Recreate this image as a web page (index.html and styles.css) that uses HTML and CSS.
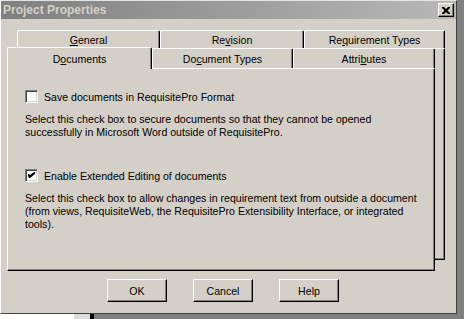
FILE: index.html
```html
<!DOCTYPE html>
<html lang="en">
<head>
    <meta charset="UTF-8">
    <title>Project Properties</title>
    <link rel="stylesheet" href="styles.css">
</head>
<body>
    <div class="window">
        <div class="titlebar">
            <span class="title">Project Properties</span>
            <span class="close">
                <svg width="8" height="7" viewBox="0 0 8 7"><path d="M0 0h2l2 2 2-2h2v1l-2.5 2.5 2.5 2.5v1h-2l-2-2-2 2h-2v-1l2.5-2.5-2.5-2.5z" fill="#000"/></svg>
            </span>
        </div>

        <!-- back row of tabs -->
        <div class="row1">
            <div class="tab w-general"><u>G</u>eneral</div>
            <div class="tab w-revision">Re<u>v</u>ision</div>
            <div class="tab w-reqtypes">Re<u>q</u>uirement Types</div>
        </div>

        <div class="deck">
            <div class="backpage"></div>
            <div class="front">
                <div class="row2">
                    <div class="tab selected w-documents">D<u>o</u>cuments</div>
                    <div class="tab w-doctypes">Do<u>c</u>ument Types</div>
                    <div class="tab w-attributes">Attri<u>b</u>utes</div>
                </div>
                <div class="panel">
                    <div class="option">
                        <span class="check"></span>
                        <span>Save documents in RequisitePro Format</span>
                    </div>
                    <p class="help">Select this check box to secure documents so that they cannot be opened<br>successfully in Microsoft Word outside of RequisitePro.</p>

                    <div class="option second">
                        <span class="check">
                            <svg width="7" height="7" viewBox="0 0 7 7"><path d="M0 2h1l1 1 4-3h1v2l-5 4h-1l-1-2z" fill="#000"/></svg>
                        </span>
                        <span>Enable Extended Editing of documents</span>
                    </div>
                    <p class="help">Select this check box to allow changes in requirement text from outside a document<br>(from views, RequisiteWeb, the RequisitePro Extensibility Interface, or integrated<br>tools).</p>
                </div>
            </div>
        </div>

        <div class="buttons">
            <div class="btn">OK</div>
            <div class="btn">Cancel</div>
            <div class="btn">Help</div>
        </div>
    </div>
    <div class="desk">
        <div class="desk-white"></div>
        <div class="desk-light"></div>
        <div class="desk-black"></div>
    </div>
</body>
</html>
```

FILE: styles.css
```css
body{
    margin: 0;
    width: 464px;
    height: 319px;
    overflow: hidden;
    background-color: #808080;
    font-family: "Liberation Sans", Arial, sans-serif;
    font-size: 10.6px;
    color: #000;
}
.window{
    width: 455px;
    height: 312px;
    background-color: #d4d0c8;
    border-top: 1px solid #e6e4de;
    border-left: 1px solid #fff;
    border-right: 1px solid #404040;
    border-bottom: 1px solid #404040;
    display: flex;
    flex-direction: column;
}
.titlebar{
    height: 18px;
    flex: none;
    background: linear-gradient(to right, #808080, #b8b8b8);
    display: flex;
    align-items: center;
    justify-content: space-between;
    padding: 0 2px 0 2px;
}
.title{
    color: #d4d0c8;
    font-weight: bold;
    font-size: 12px;
}
.close{
    width: 16px;
    height: 14px;
    box-sizing: border-box;
    background-color: #d4d0c8;
    border-top: 1px solid #fff;
    border-left: 1px solid #fff;
    border-right: 1px solid #000;
    border-bottom: 1px solid #000;
    box-shadow: inset -1px -1px #808080;
    display: flex;
    align-items: center;
    justify-content: center;
}

/* tabs */
.row1{
    display: flex;
    height: 18px;
    margin-top: 11px;
    margin-left: 16px;
    flex: none;
}
.tab{
    box-sizing: border-box;
    display: flex;
    align-items: center;
    justify-content: center;
    background-color: #d4d0c8;
    border-top: 1px solid #fff;
    border-left: 1px solid #fff;
    border-right: 1px solid #000;
    box-shadow: inset -1px 0 #808080;
    border-radius: 2px 2px 0 0;
}
.row1 .tab{height: 18px;}
.w-general{width: 143px;}
.w-revision{width: 144px;}
.w-reqtypes{width: 141px;}
.w-documents{width: 145px;}
.w-doctypes{width: 141px;}
.w-attributes{width: 142px;}

.deck{
    display: grid;
    margin-left: 6px;
    flex: none;
}
.backpage{
    grid-area: 1 / 1;
    box-sizing: border-box;
    margin-left: 10px;
    width: 428px;
    height: 212px;
    border-top: 1px solid #fff;
    border-right: 1px solid #000;
    border-bottom: 1px solid #000;
    box-shadow: inset -1px -1px #808080;
}
.front{
    grid-area: 1 / 1;
    width: 428px;
    margin-top: -1px;
}
.row2{
    display: flex;
    align-items: flex-end;
    height: 21px;
}
.row2 .tab{height: 20px;}
.row2 .tab.selected{
    height: 22px;
    margin-bottom: -1px;
    position: relative;
    z-index: 1;
}
.panel{
    box-sizing: border-box;
    height: 203px;
    border-top: 1px solid #fff;
    border-left: 1px solid #fff;
    border-right: 1px solid #000;
    border-bottom: 1px solid #000;
    box-shadow: inset -1px -1px #808080;
    padding: 21px 17px 0 17px;
    background-color: #d4d0c8;
}
.option{
    display: flex;
    align-items: center;
    gap: 6px;
    height: 13px;
}
.option.second{margin-top: 30px;}
.check{
    width: 13px;
    height: 13px;
    box-sizing: border-box;
    background-color: #fff;
    border-top: 1px solid #808080;
    border-left: 1px solid #808080;
    border-right: 1px solid #fff;
    border-bottom: 1px solid #fff;
    box-shadow: inset 1px 1px #404040, inset -1px -1px #d4d0c8;
    display: flex;
    align-items: center;
    justify-content: center;
}
.help{
    margin: 10px 0 0 0;
    line-height: 13px;
    white-space: nowrap;
}

/* buttons */
.buttons{
    display: flex;
    gap: 26px;
    margin-top: 8px;
    margin-left: 106px;
}
.btn{
    box-sizing: border-box;
    width: 60px;
    height: 23px;
    display: flex;
    align-items: center;
    justify-content: center;
    border-top: 1px solid #fff;
    border-left: 1px solid #fff;
    border-right: 1px solid #000;
    border-bottom: 1px solid #000;
    box-shadow: inset -1px -1px #808080;
}

/* what shows below the dialog */
.desk{
    display: flex;
    height: 5px;
}
.desk-white{width: 74px; background-color: #fff;}
.desk-light{width: 16px; background-color: #dcdcdc;}
.desk-black{width: 4px; background-color: #000;}
```
